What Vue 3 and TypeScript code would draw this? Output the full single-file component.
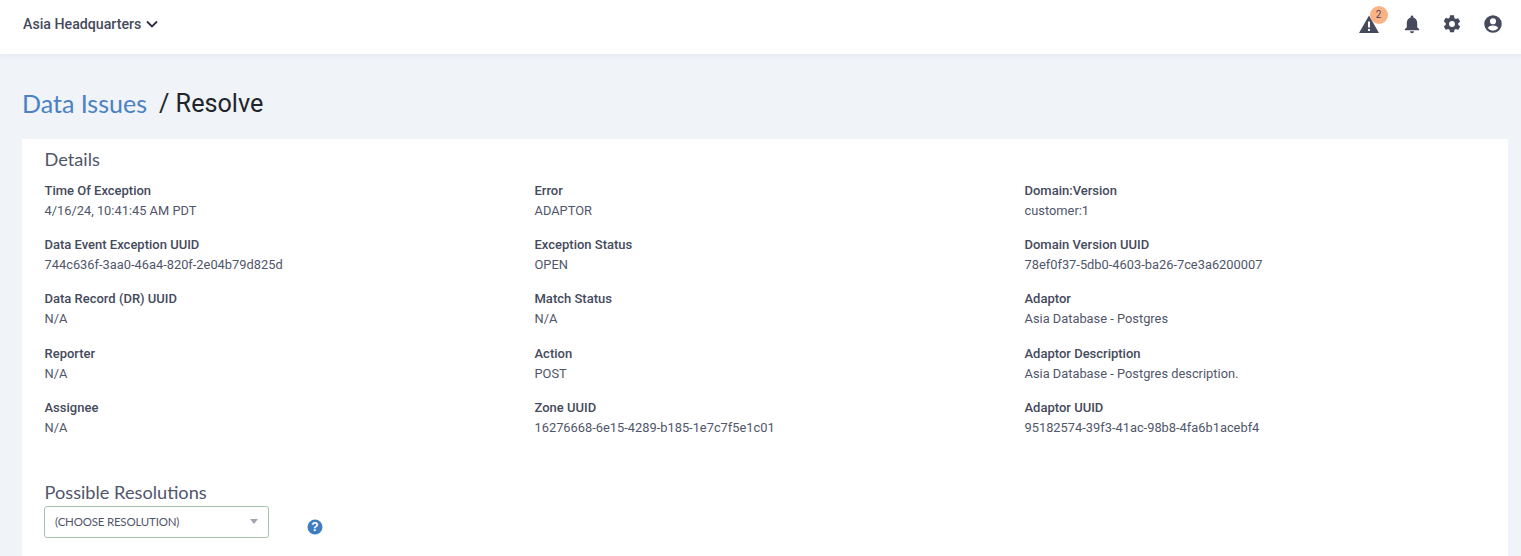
<script setup lang="ts">
// Resolve page for a data issue
interface Field {
  label: string
  value: string
}

const columns: Field[][] = [
  [
    { label: 'Time Of Exception', value: '4/16/24, 10:41:45 AM PDT' },
    { label: 'Data Event Exception UUID', value: '744c636f-3aa0-46a4-820f-2e04b79d825d' },
    { label: 'Data Record (DR) UUID', value: 'N/A' },
    { label: 'Reporter', value: 'N/A' },
    { label: 'Assignee', value: 'N/A' }
  ],
  [
    { label: 'Error', value: 'ADAPTOR' },
    { label: 'Exception Status', value: 'OPEN' },
    { label: 'Match Status', value: 'N/A' },
    { label: 'Action', value: 'POST' },
    { label: 'Zone UUID', value: '16276668-6e15-4289-b185-1e7c7f5e1c01' }
  ],
  [
    { label: 'Domain:Version', value: 'customer:1' },
    { label: 'Domain Version UUID', value: '78ef0f37-5db0-4603-ba26-7ce3a6200007' },
    { label: 'Adaptor', value: 'Asia Database - Postgres' },
    { label: 'Adaptor Description', value: 'Asia Database - Postgres description.' },
    { label: 'Adaptor UUID', value: '95182574-39f3-41ac-98b8-4fa6b1acebf4' }
  ]
]
</script>

<template>
  <div class="page">
    <header class="topbar">
      <div class="org">
        <span>Asia Headquarters</span>
        <svg class="chevron" width="14" height="14" viewBox="0 0 14 14">
          <path d="M2 4.500 7 9.500 12 4.500" fill="none" stroke="#2b2d3a" stroke-width="1.800" />
        </svg>
      </div>
      <div class="actions">
        <div class="alert">
          <svg width="20" height="20" viewBox="0 0 20 20">
            <path fill-rule="evenodd" fill="#454a5c" d="M10 1.500 20 19H0ZM9 7.500v6h2v-6ZM9 15v2h2v-2Z" />
          </svg>
          <span class="badge">2</span>
        </div>
        <svg class="bell" width="18" height="20" viewBox="0 0 18 20">
          <path fill="#454a5c" d="M9 1.500c.8 0 1.300.6 1.300 1.300v.6c2.400.6 3.900 2.700 3.900 5.200v4.600l2 2v1H1.800v-1l2-2V8.600c0-2.500 1.500-4.600 3.900-5.200v-.6C7.700 2.100 8.200 1.500 9 1.500ZM7 17.300h4a2 2 0 0 1-4 0Z" />
        </svg>
        <svg class="gear" width="20" height="20" viewBox="0 0 24 24">
          <path fill="#454a5c" d="M19.400 13c.05-.33.1-.66.1-1s-.05-.67-.1-1l2.100-1.650c.2-.15.25-.42.12-.64l-2-3.460c-.12-.22-.39-.3-.61-.22l-2.490 1c-.52-.4-1.060-.73-1.690-.98l-.37-2.650A.506.506 0 0 0 14 1.500h-4c-.25 0-.46.18-.5.420l-.37 2.650c-.63.25-1.170.59-1.690.98l-2.490-1a.5.5 0 0 0-.61.220l-2 3.460c-.13.220-.07.490.12.640L4.570 11c-.04.330-.07.670-.07 1s.03.670.07 1l-2.110 1.650c-.19.150-.25.420-.12.640l2 3.460c.12.220.39.300.61.220l2.490-1c.52.400 1.060.730 1.690.980l.37 2.650c.04.240.25.420.5.420h4c.25 0 .46-.18.5-.42l.37-2.650c.63-.25 1.170-.59 1.690-.98l2.490 1c.22.080.49 0 .61-.22l2-3.460c.12-.22.07-.49-.12-.64ZM12 15.500a3.500 3.500 0 1 1 0-7 3.500 3.500 0 0 1 0 7Z" />
        </svg>
        <svg width="20" height="20" viewBox="0 0 24 24">
          <path fill="#454a5c" d="M12 1.500a10.500 10.500 0 1 0 0 21 10.500 10.500 0 0 0 0-21Zm0 3.500a3.700 3.700 0 1 1 0 7.400A3.700 3.700 0 0 1 12 5Zm0 15a8 8 0 0 1-6.300-3.100c.9-2 3.800-3 6.300-3s5.400 1 6.300 3A8 8 0 0 1 12 20Z" />
        </svg>
      </div>
    </header>

    <main class="content">
      <h1 class="crumbs"><a class="crumb-link">Data Issues</a><span class="crumb-current">/ Resolve</span></h1>

      <section class="card">
        <h2 class="section-title">Details</h2>
        <div class="details">
          <div v-for="(col, i) in columns" :key="i" class="column">
            <div v-for="field in col" :key="field.label" class="field">
              <div class="field-label">{{ field.label }}</div>
              <div class="field-value">{{ field.value }}</div>
            </div>
          </div>
        </div>

        <h2 class="section-title resolutions">Possible Resolutions</h2>
        <div class="resolution-row">
          <div class="select">
            <span>(CHOOSE RESOLUTION)</span>
            <i class="caret"></i>
          </div>
          <svg class="help" width="16" height="16" viewBox="0 0 16 16">
            <circle cx="8" cy="8" r="7.500" fill="#3f7cc0" />
            <text x="8" y="12" text-anchor="middle" class="help-mark">?</text>
          </svg>
        </div>
      </section>
    </main>
  </div>
</template>

<style>
html,
body {
  margin: 0;
  height: 100%;
  overflow: hidden;
  background: #f0f3f8;
}
</style>

<style scoped>
.page {
  height: 556px;
  overflow: hidden;
  background: #f0f3f8;
  font-family: Roboto, "Liberation Sans", sans-serif;
}

.topbar {
  display: flex;
  align-items: center;
  justify-content: space-between;
  box-sizing: border-box;
  height: 54px;
  padding: 0 18px 6px 23px;
  background: #fff;
  box-shadow: 0 1px 6px rgba(60, 70, 100, 0.08);
}

.org {
  display: flex;
  align-items: center;
  gap: 4px;
  font-size: 14.200px;
  font-weight: 500;
  color: #454a5c;
}

.actions {
  display: flex;
  align-items: center;
  gap: 20px;
}

.bell {
  margin-left: 4px;
}

.gear {
  margin: 0 1px 0 1.500px;
}

.alert {
  position: relative;
  display: flex;
}

.badge {
  position: absolute;
  top: -8px;
  right: -9px;
  width: 18px;
  height: 18px;
  border-radius: 50%;
  background: #fbb384;
  color: #454a5c;
  font-size: 10px;
  line-height: 18px;
  text-align: center;
}

.content {
  padding: 33px 13px 0 22px;
}

.crumbs {
  display: flex;
  gap: 12px;
  margin: 0 0 19px;
  font-family: Lato, sans-serif;
  font-size: 25px;
  font-weight: 400;
  line-height: 33px;
}

.crumb-link {
  color: #4a82c4;
}

.crumb-current {
  color: #212529;
  font-family: Roboto, sans-serif;
  font-size: 25.200px;
}

.card {
  height: 430px;
  padding: 9px 22.500px;
  background: #fff;
}

.section-title {
  margin: 0;
  font-family: Lato, sans-serif;
  font-size: 18.200px;
  font-weight: 400;
  line-height: 22px;
  color: #50566a;
}

.details {
  display: grid;
  grid-template-columns: repeat(3, 490px);
  margin-top: 11px;
}

.column {
  display: flex;
  flex-direction: column;
  gap: 14px;
}

.field {
  height: 40.200px;
  font-size: 13px;
  line-height: 20px;
  color: #454a5c;
}

.field-label {
  font-weight: 500;
}

.field-value {
  font-size: 12.850px;
  color: #50566a;
}

.resolutions {
  margin-top: 43px;
}

.resolution-row {
  display: flex;
  align-items: flex-start;
  margin-top: 3px;
}

.select {
  display: flex;
  align-items: center;
  justify-content: space-between;
  box-sizing: border-box;
  width: 225px;
  height: 32px;
  margin-left: -0.500px;
  padding: 0 10px;
  border: 1px solid #a9c4ae;
  border-radius: 3px;
  font-family: Lato, sans-serif;
  font-size: 11.500px;
  letter-spacing: -0.2px;
  color: #50566a;
}

.caret {
  width: 0;
  height: 0;
  border-left: 4px solid transparent;
  border-right: 4px solid transparent;
  border-top: 5px solid #a2a5ad;
}

.help {
  margin: 13px 0 0 38px;
}

.help-mark {
  fill: #fff;
  font-family: "Liberation Sans", sans-serif;
  font-size: 12px;
  font-weight: 700;
}
</style>
